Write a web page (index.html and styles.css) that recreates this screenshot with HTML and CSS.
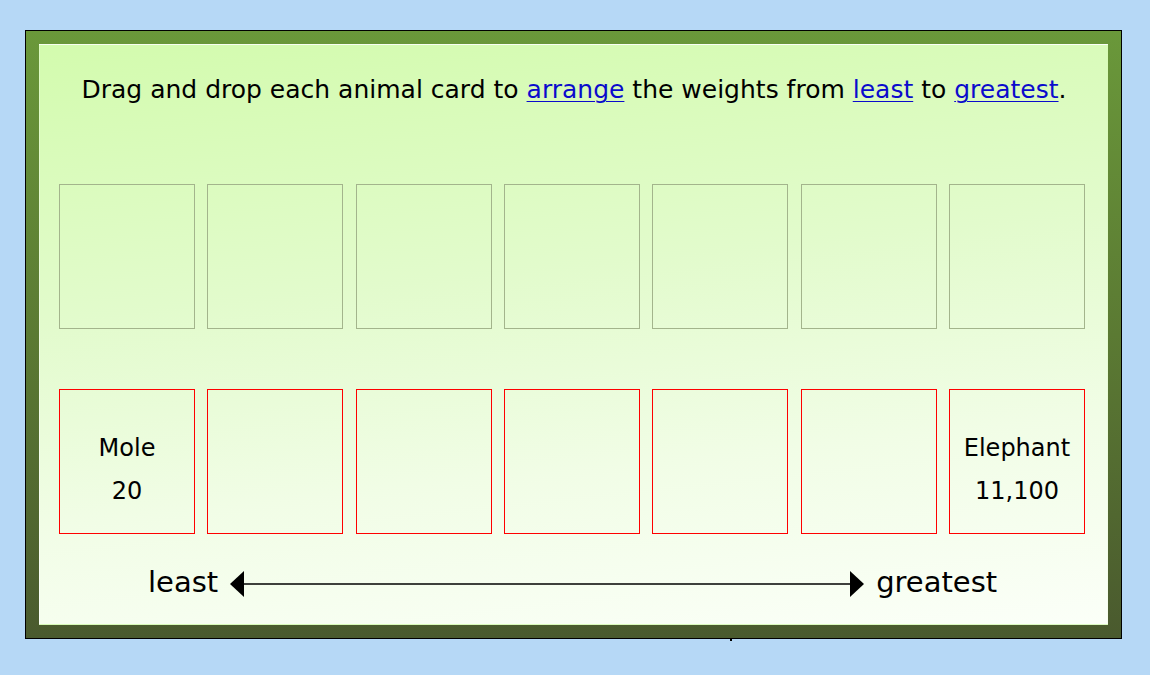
FILE: index.html
```html
<!DOCTYPE html>
<html lang="en">
<head>
<meta charset="utf-8">
<title>Arrange the weights</title>
<link rel="stylesheet" href="styles.css">
</head>
<body>
<div class="frame">
  <div class="panel">
    <div class="header">
      <p class="instruction">Drag and drop each animal card to <a href="#">arrange</a> the weights from <a href="#">least</a> to <a href="#">greatest</a>.</p>
    </div>
    <div class="row">
      <div class="slot"></div>
      <div class="slot"></div>
      <div class="slot"></div>
      <div class="slot"></div>
      <div class="slot"></div>
      <div class="slot"></div>
      <div class="slot"></div>
    </div>
    <div class="row cards">
      <div class="card"><span class="name">Mole</span><span class="weight">20</span></div>
      <div class="card"></div>
      <div class="card"></div>
      <div class="card"></div>
      <div class="card"></div>
      <div class="card"></div>
      <div class="card"><span class="name">Elephant</span><span class="weight">11,100</span></div>
    </div>
    <div class="scale">
      <span class="label">least</span>
      <svg class="arrow" width="634" height="26" viewBox="0 0 634 26" aria-hidden="true">
        <polygon points="0,13 14,0 14,26" fill="#000"/>
        <line x1="14" y1="13" x2="620" y2="13" stroke="#000" stroke-width="1.5"/>
        <polygon points="634,13 620,0 620,26" fill="#000"/>
      </svg>
      <span class="label">greatest</span>
    </div>
  </div>
  <span class="dot"></span>
</div>
</body>
</html>
```

FILE: styles.css
```css
* {
  box-sizing: border-box;
}

html, body {
  margin: 0;
  padding: 0;
}

body {
  background: #b6d8f6;
  font-family: "DejaVu Sans", "Liberation Sans", sans-serif;
  color: #000;
  width: 1150px;
  height: 675px;
  overflow: hidden;
  padding-top: 30px;
  padding-left: 25px;
}

.frame {
  position: relative;
  width: 1097px;
  height: 609px;
  border: 1px solid #000;
  padding: 13px;
  background: linear-gradient(180deg, #6a983a 0%, #5b7a33 50%, #4a5a2e 100%);
}

.panel {
  width: 1069px;
  height: 581px;
  border: 1px solid rgba(255, 255, 255, 0.1);
  background: linear-gradient(174deg, #d3fbae 0%, #e2fbcc 40%, #f1fde6 70%, #fbfff8 100%);
  padding-left: 19px;
}

.header {
  height: 139px;
  padding-top: 30px;
}

.instruction {
  margin: 0;
  width: 1026px;
  text-align: center;
  font-size: 25px;
  line-height: 30px;
  white-space: nowrap;
  transform: translateX(2px);
}

.instruction a {
  color: #0b0bcc;
  text-decoration: underline;
  text-decoration-thickness: 1px;
  text-underline-offset: 3px;
}

.row {
  display: flex;
  justify-content: space-between;
  width: 1026px;
  height: 145px;
}

.slot {
  width: 136px;
  height: 145px;
  border: 1px solid #a3b48c;
}

.cards {
  margin-top: 60px;
}

.card {
  width: 136px;
  height: 145px;
  border: 1px solid #ff0000;
  padding-top: 37px;
  display: flex;
  flex-direction: column;
  align-items: center;
  font-size: 24px;
  line-height: 43px;
}

.scale {
  display: flex;
  align-items: flex-start;
  gap: 12px;
  margin-top: 30px;
  padding-left: 89px;
}

.label {
  font-size: 29px;
  line-height: 36px;
}

.arrow {
  display: block;
  margin-top: 7px;
  flex: none;
}

.dot {
  position: absolute;
  left: 704px;
  bottom: -3px;
  width: 2px;
  height: 2px;
  background: #000;
}
```
